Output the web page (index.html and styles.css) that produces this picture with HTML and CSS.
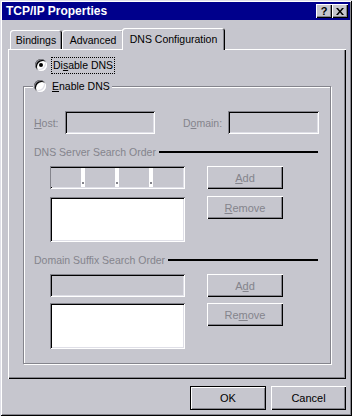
FILE: index.html
```html
<!DOCTYPE html>
<html lang="en">
<head>
    <meta charset="UTF-8">
    <title>TCP/IP Properties</title>
    <link rel="stylesheet" href="styles.css">
</head>
<body>

    <div class="window">
        <div class="titlebar">
            <span class="title">TCP/IP Properties</span>
            <div class="title-btns">
                <span class="title-btn help">?</span>
                <span class="title-btn">
                    <svg width="8" height="7" viewBox="0 0 8 7">
                        <path d="M0 0h2l2 2.5L6 0h2L5 3.5 8 7H6L4 4.5 2 7H0l3-3.5z" fill="#000"/>
                    </svg>
                </span>
            </div>
        </div>

        <div class="tabs">
            <div class="tab" style="width: 52px">Bindings</div>
            <div class="tab" style="width: 62px">Advanced</div>
            <div class="tab active" style="width: 103px">DNS Configuration</div>
        </div>

        <div class="panel">
            <div class="radio-row first">
                <span class="radio checked"></span>
                <span class="focus">Di<u>s</u>able DNS</span>
            </div>

            <div class="group">
                <div class="legend">
                    <span class="radio"></span>
                    <span><u>E</u>nable DNS</span>
                </div>

                <div class="host-row">
                    <span class="label" style="width: 31px"><u>H</u>ost:</span>
                    <span class="field" style="width: 90px"></span>
                    <span class="label domain" style="width: 45px">D<u>o</u>main:</span>
                    <span class="field" style="width: 91px"></span>
                </div>

                <div class="section">
                    <span class="label">DNS Server Search Order</span>
                    <span class="rule"></span>
                </div>

                <div class="grid">
                    <div class="col">
                        <div class="ipbox">
                            <span class="octet"></span><span class="sep"></span>
                            <span class="octet"></span><span class="sep"></span>
                            <span class="octet"></span><span class="sep"></span>
                            <span class="octet"></span>
                        </div>
                        <div class="list" style="height: 45px"></div>
                    </div>
                    <div class="col buttons">
                        <button class="btn"><u>A</u>dd</button>
                        <button class="btn"><u>R</u>emove</button>
                    </div>
                </div>

                <div class="section">
                    <span class="label">Domain Suffix Search Order</span>
                    <span class="rule"></span>
                </div>

                <div class="grid second">
                    <div class="col">
                        <span class="field wide"></span>
                        <div class="list" style="height: 46px"></div>
                    </div>
                    <div class="col buttons">
                        <button class="btn">A<u>d</u>d</button>
                        <button class="btn">Re<u>m</u>ove</button>
                    </div>
                </div>
            </div>
        </div>

        <div class="footer">
            <button class="btn enabled default">OK</button>
            <button class="btn enabled cancel">Cancel</button>
        </div>
    </div>

</body>
</html>
```

FILE: styles.css
```css
body {
    margin: 0;
    padding: 0;
    background-color: #c6c6ce;
    font-family: 'Liberation Sans', Arial, sans-serif;
    font-size: 10.5px;
    color: #000;
}

u {
    text-decoration: underline;
    text-underline-offset: 1px;
}

.window {
    box-sizing: border-box;
    width: 352px;
    height: 416px;
    padding: 2px;
    background-color: #c6c6ce;
    box-shadow: inset 1px 1px #dfdfe7, inset -1px -1px #000, inset 2px 2px #fff, inset -2px -2px #84848c;
    overflow: hidden;
}

/* title bar */

.titlebar {
    height: 18px;
    background-color: #00008c;
    display: flex;
    align-items: center;
    justify-content: space-between;
    padding: 0 2px 0 4px;
}

.title {
    color: #fff;
    font-weight: bold;
    font-size: 12px;
}

.title-btns {
    display: flex;
}

.title-btn {
    box-sizing: border-box;
    width: 16px;
    height: 14px;
    background-color: #c6c6ce;
    box-shadow: inset 1px 1px #fff, inset -1px -1px #000, inset -2px -2px #84848c;
    display: flex;
    align-items: center;
    justify-content: center;
}

.help {
    font-weight: bold;
    font-size: 11px;
    padding-bottom: 1px;
}

/* tabs */

.tabs {
    display: flex;
    align-items: flex-end;
    height: 21px;
    margin-top: 8px;
    padding-left: 8px;
}

.tab {
    box-sizing: border-box;
    height: 19px;
    display: flex;
    align-items: center;
    justify-content: center;
    padding-top: 1px;
    border-radius: 3px 3px 0 0;
    box-shadow: inset 1px 1px #fff, inset -1px 0 #000, inset -2px 0 #84848c;
    background-color: #c6c6ce;
}

.tab.active {
    height: 22px;
    margin-left: -2px;
    margin-bottom: -1px;
    padding-bottom: 2px;
    position: relative;
    z-index: 1;
}

/* tab panel */

.panel {
    box-sizing: border-box;
    width: 338px;
    height: 330px;
    margin-left: 6px;
    padding: 8px 0 0 15px;
    box-shadow: inset 1px 1px #fff, inset -1px -1px #000, inset -2px -2px #84848c;
}

.radio-row,
.legend {
    display: flex;
    align-items: center;
    height: 16px;
}

.radio-row.first {
    margin-left: 12px;
}

.radio {
    width: 12px;
    height: 12px;
    border-radius: 50%;
    background-color: #fff;
    box-shadow: inset 1px 1px #84848c, inset -1px -1px #fff, inset 2px 2px #000, inset -2px -2px #dfdfe7;
    margin-right: 6px;
    display: flex;
    align-items: center;
    justify-content: center;
}

.radio.checked::after {
    content: "";
    width: 4px;
    height: 4px;
    border-radius: 50%;
    background-color: #000;
}

.focus {
    outline: 1px dotted #000;
    outline-offset: 0;
    padding: 1px 1px 2px 1px;
    margin-left: -1px;
}

.group {
    box-sizing: border-box;
    width: 308px;
    height: 278px;
    margin-top: 13px;
    padding-left: 10px;
    border: 1px solid #84848c;
    box-shadow: inset 1px 1px #fff, 1px 1px #fff;
}

.legend {
    width: max-content;
    margin-top: -9px;
    margin-left: -1px;
    padding: 0 2px 0 1px;
    background-color: #c6c6ce;
}

.label {
    color: #84848c;
    white-space: nowrap;
}

.host-row {
    display: flex;
    align-items: center;
    height: 23px;
    margin-top: 17px;
}

.domain {
    margin-left: 28px;
}

.field {
    box-sizing: border-box;
    display: block;
    height: 23px;
    background-color: #c6c6ce;
    box-shadow: inset 1px 1px #84848c, inset -1px -1px #fff, inset 2px 2px #000, inset -2px -2px #dfdfe7;
}

.field.wide {
    width: 135px;
}

.section {
    display: flex;
    align-items: center;
    width: 284px;
    height: 14px;
    margin-top: 11px;
}

.rule {
    flex: 1;
    height: 2px;
    margin-left: 3px;
    background-color: #000;
}

.grid {
    display: flex;
    gap: 22px;
    margin: 7px 0 0 16px;
}

.col {
    display: flex;
    flex-direction: column;
    gap: 8px;
}

.grid.second .col {
    gap: 6px;
}

.col.buttons {
    gap: 7px;
}

.ipbox {
    box-sizing: border-box;
    width: 135px;
    height: 23px;
    padding: 2px 2px 2px 1px;
    background-color: #fff;
    display: flex;
    box-shadow: inset 1px 1px #84848c, inset -1px -1px #fff, inset 2px 2px #000, inset -2px -2px #dfdfe7;
}

.octet {
    flex: 1;
    background-color: #c6c6ce;
}

.sep {
    width: 4px;
    position: relative;
}

.sep::after {
    content: "";
    position: absolute;
    left: 1px;
    bottom: 3px;
    width: 2px;
    height: 2px;
    background-color: #84848c;
}

.list {
    box-sizing: border-box;
    width: 135px;
    background-color: #fff;
    box-shadow: inset 1px 1px #84848c, inset -1px -1px #fff, inset 2px 2px #000, inset -2px -2px #dfdfe7;
}

.btn {
    box-sizing: border-box;
    width: 76px;
    height: 23px;
    padding: 0;
    border: none;
    background-color: #c6c6ce;
    font-family: 'Liberation Sans', Arial, sans-serif;
    font-size: 11px;
    color: #84848c;
    box-shadow: inset 1px 1px #fff, inset -1px -1px #000, inset -2px -2px #84848c;
}

.btn.enabled {
    color: #000;
}

/* bottom buttons */

.footer {
    display: flex;
    justify-content: flex-end;
    gap: 5px;
    margin: 7px 4px 0 0;
}

.btn.default {
    height: 24px;
    border: 1px solid #000;
    box-shadow: inset 1px 1px #fff, inset -1px -1px #84848c;
}

.btn.cancel {
    width: 75px;
    height: 24px;
    box-shadow: inset 1px 1px #fff, inset -1px -1px #000, inset -2px -2px #84848c;
}
```
